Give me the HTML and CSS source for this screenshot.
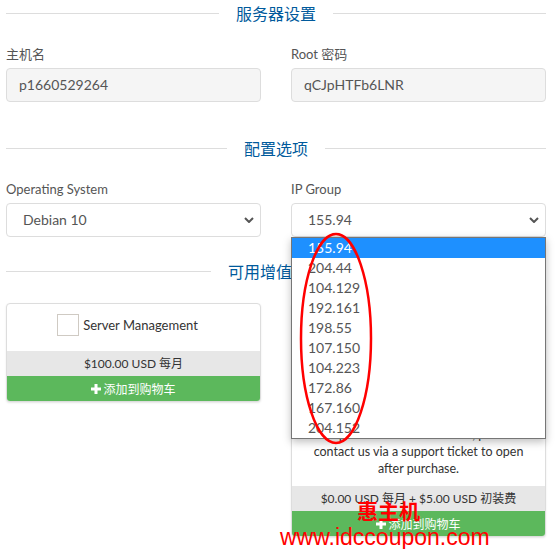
FILE: index.html
```html
<!DOCTYPE html>
<html lang="zh">
<head>
<meta charset="utf-8">
<title>服务器设置</title>
<link rel="stylesheet" href="styles.css">
</head>
<body>
<div class="page">
  <div class="heading"><span>服务器设置</span></div>
  <div class="row row-first">
    <div class="field">
      <label class="label">主机名</label>
      <div class="input">p1660529264</div>
    </div>
    <div class="field">
      <label class="label">Root 密码</label>
      <div class="input">qCJpHTFb6LNR</div>
    </div>
  </div>

  <div class="heading heading-second"><span>配置选项</span></div>
  <div class="row row-first">
    <div class="field">
      <label class="label">Operating System</label>
      <div class="select">Debian 10<svg class="chev" width="10" height="6" viewBox="0 0 10 6"><polyline points="1,1 5,5 9,1" fill="none" stroke="#555" stroke-width="2"/></svg></div>
    </div>
    <div class="field dd-host">
      <label class="label">IP Group</label>
      <div class="select">155.94<svg class="chev" width="10" height="6" viewBox="0 0 10 6"><polyline points="1,1 5,5 9,1" fill="none" stroke="#555" stroke-width="2"/></svg></div>
      <ul class="dropdown">
        <li class="active">155.94</li>
        <li>204.44</li>
        <li>104.129</li>
        <li>192.161</li>
        <li>198.55</li>
        <li>107.150</li>
        <li>104.223</li>
        <li>172.86</li>
        <li>167.160</li>
        <li>204.152</li>
      </ul>
    </div>
  </div>

  <div class="heading heading-third"><span>可用增值服务</span></div>
  <div class="row row-first cards">
    <div class="card">
      <div class="card-body">
        <div class="check-row"><span class="checkbox"></span><span class="check-title">Server Management</span></div>
      </div>
      <div class="price">$100.00 USD 每月</div>
      <div class="add"><svg class="plus" width="10" height="10" viewBox="0 0 10 10"><rect x="3.5" y="0" width="3" height="10" fill="#fff"/><rect x="0" y="3.5" width="10" height="3" fill="#fff"/></svg>添加到购物车</div>
    </div>
    <div class="card">
      <div class="card-body card-body-long">
        <div class="check-row"><span class="checkbox"></span><span class="check-title">Plesk Web Admin Edition</span></div>
        <div class="desc">Plesk license for one server,<br>billed monthly together with<br>your VPS. Web Admin Edition<br>supports up to 10 domains.<br>If you need to install it or<br>request the non-Plesk note, please<br>contact us via a support ticket to open<br>after purchase.</div>
      </div>
      <div class="price">$0.00 USD 每月 + $5.00 USD 初装费</div>
      <div class="add"><svg class="plus" width="10" height="10" viewBox="0 0 10 10"><rect x="3.5" y="0" width="3" height="10" fill="#fff"/><rect x="0" y="3.5" width="10" height="3" fill="#fff"/></svg>添加到购物车</div>
    </div>
  </div>
</div>

<svg class="mark-ellipse" width="556" height="549" viewBox="0 0 556 549"><ellipse cx="336" cy="338.5" rx="35" ry="104.5" fill="none" stroke="#f00" stroke-width="2.5"/></svg>
<div class="wm-cn">惠主机</div>
<div class="wm-url">www.idccoupon.com</div>
</body>
</html>
```

FILE: styles.css
```css
html, body {
  margin: 0;
  padding: 0;
  background: #fff;
}
body {
  font-family: "Lato", "Noto Sans CJK SC", sans-serif;
  color: #333;
  position: relative;
  width: 556px;
  height: 549px;
  overflow: hidden;
}
.page {
  padding: 0 10px 0 6px;
}
.heading {
  display: flex;
  align-items: center;
  height: 27px;
  line-height: 27px;
  font-family: "Noto Sans CJK SC", sans-serif;
  font-size: 16px;
  color: #005a9c;
}
.heading::before,
.heading::after {
  content: "";
  flex: 1;
  height: 1px;
  background: #ddd;
}
.heading span {
  padding: 0 17px;
}
.heading-second { margin-top: 33px; }
.heading-third { margin-top: 21px; }

.row {
  display: grid;
  grid-template-columns: 1fr 1fr;
  column-gap: 30px;
}
.row-first { margin-top: 18px; }
.cards { align-items: start; }

.field { position: relative; }
.label {
  display: block;
  font-size: 13px;
  line-height: 18px;
  margin-bottom: 5px;
  color: #555;
  font-family: "Lato", "Noto Sans CJK SC", sans-serif;
}
.input {
  box-sizing: border-box;
  height: 34px;
  line-height: 32px;
  border: 1px solid #ddd;
  border-radius: 4px;
  background: #f5f5f5;
  padding: 0 12px;
  font-size: 14px;
  color: #555;
}
.select {
  box-sizing: border-box;
  height: 34px;
  line-height: 32px;
  border: 1px solid #ddd;
  border-radius: 4px;
  background: #fff;
  padding: 0 6px 0 16px;
  font-size: 14px;
  color: #555;
  display: flex;
  align-items: center;
  justify-content: space-between;
}
.chev { display: block; }

.dropdown {
  position: absolute;
  left: 0;
  right: 0;
  top: 100%;
  margin: 0;
  padding: 0;
  list-style: none;
  background: #fff;
  border: 1px solid #767676;
  box-shadow: 0 3px 8px rgba(0,0,0,0.25);
  z-index: 10;
}
.dropdown li {
  height: 20px;
  line-height: 20px;
  padding-left: 16px;
  font-size: 14px;
  color: #555;
}
.dropdown li.active {
  background: #1e90ff;
  color: #fff;
}

.card {
  border: 1px solid #ddd;
  border-radius: 4px;
  overflow: hidden;
  box-shadow: 0 1px 2px rgba(0,0,0,0.1);
  background: #fff;
}
.card-body {
  padding: 10px 10px 10px;
}
.card-body-long {
  padding-bottom: 9px;
}
.check-row {
  display: flex;
  align-items: center;
  justify-content: center;
  height: 22px;
  margin-bottom: 5px;
  padding-right: 12px;
}
.checkbox {
  box-sizing: border-box;
  width: 22px;
  height: 22px;
  border: 1px solid #cfcac3;
  background: #fff;
  margin-right: 4px;
}
.check-title {
  font-size: 13px;
  color: #333;
}
.desc {
  margin-top: 5px;
  text-align: center;
  font-size: 12.5px;
  line-height: 17px;
  color: #333;
}
.price {
  height: 25px;
  line-height: 25px;
  background: #e7e7e7;
  text-align: center;
  font-size: 12px;
  color: #333;
}
.add {
  height: 25px;
  background: #5cb85c;
  color: #fff;
  font-size: 12px;
  display: flex;
  align-items: center;
  justify-content: center;
}
.plus {
  display: block;
  margin-right: 2px;
}

.mark-ellipse {
  position: absolute;
  left: 0;
  top: 0;
  z-index: 20;
  pointer-events: none;
}
.wm-cn {
  position: absolute;
  left: 357px;
  top: 496px;
  font-family: "Noto Sans CJK SC", sans-serif;
  font-weight: 700;
  font-size: 21px;
  line-height: 28px;
  color: #f00;
  z-index: 21;
}
.wm-url {
  position: absolute;
  left: 280px;
  top: 524px;
  font-family: "Liberation Sans", sans-serif;
  font-size: 23px;
  line-height: 26px;
  color: #f00;
  z-index: 21;
}
```
